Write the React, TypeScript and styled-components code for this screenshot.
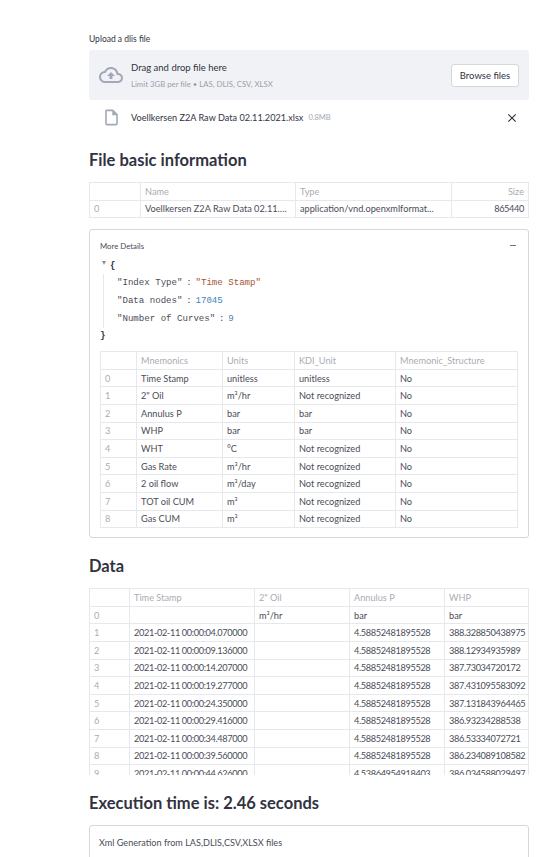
import React from 'react'
import styled, { createGlobalStyle } from 'styled-components'

const GlobalStyle = createGlobalStyle`
    html, body {
        margin: 0;
        padding: 0;
        height: 857px;
        overflow: hidden;
        background: #fff;
    }
    * {
        box-sizing: border-box;
    }
`

const Page = styled.main`
    width: 555px;
    padding: 34px 26px 0 89px;
    font-family: 'Lato', 'Open Sans', sans-serif;
    color: #31333f;
`

const UploadLabel = styled.label`
    display: block;
    font-size: 8.5px;
    line-height: 11px;
    margin-bottom: 5px;
`

const DropZone = styled.section`
    display: flex;
    align-items: center;
    height: 50px;
    padding: 0 10px;
    background: #f0f2f6;
    border-radius: 3px;
`

const CloudIcon = styled.svg`
    width: 24px;
    height: 24px;
    fill: #a3a8b8;
    margin-right: 8px;
`

const DropText = styled.div`
    flex: 1;
    display: flex;
    flex-direction: column;
    gap: 5px;
`

const DropTitle = styled.span`
    font-size: 9.5px;
    line-height: 12px;
`

const DropHint = styled.span`
    font-size: 7.8px;
    line-height: 10px;
    color: #9a9fa9;
`

const BrowseButton = styled.button`
    width: 68px;
    height: 23px;
    padding: 0;
    background: #fff;
    border: 1px solid #d5d7dc;
    border-radius: 3px;
    font-family: inherit;
    font-size: 9.5px;
    color: #31333f;
`

const FileRow = styled.div`
    display: flex;
    align-items: center;
    height: 35px;
    padding: 0 10px 0 13px;
`

const FileIcon = styled.svg`
    width: 19px;
    height: 19px;
    fill: #a3a8b8;
    margin-right: 10px;
`

const FileName = styled.span`
    font-size: 9.15px;
`

const FileSize = styled.span`
    flex: 1;
    margin-left: 5px;
    font-size: 7.5px;
    color: #a3a8b4;
`

const CloseIcon = styled.svg`
    width: 14px;
    height: 14px;
    fill: #31333f;
`

const Heading = styled.h2<{ $top: number; $bottom: number }>`
    margin: ${p => p.$top}px 0 ${p => p.$bottom}px;
    font-size: 16.5px;
    line-height: 22px;
    font-weight: 700;
    color: #31333f;
`

const Grid = styled.div<{ $cols: string }>`
    display: grid;
    grid-template-columns: ${p => p.$cols};
    grid-auto-rows: 17.6px;
    border-top: 1px solid #e6e8eb;
    border-left: 1px solid #e6e8eb;
`

const ClippedGrid = styled(Grid)`
    height: 187px;
    overflow: hidden;
`

const Cell = styled.div<{ $muted?: boolean; $right?: boolean; $numeric?: boolean }>`
    display: flex;
    align-items: center;
    justify-content: ${p => (p.$right ? 'flex-end' : 'flex-start')};
    min-width: 0;
    padding: 0 4px;
    border-right: 1px solid #e6e8eb;
    border-bottom: 1px solid #e6e8eb;
    font-size: 9.2px;
    letter-spacing: ${p => (p.$numeric ? '-0.36px' : '0')};
    white-space: nowrap;
    overflow: hidden;
    color: ${p => (p.$muted ? '#aaacb3' : '#4a4d58')};
`

const Ellipsis = styled.span`
    overflow: hidden;
    text-overflow: ellipsis;
`

const Expander = styled.section`
    margin-top: 11px;
    height: 309px;
    padding: 10px 10px 0;
    border: 1px solid #d5d7dc;
    border-radius: 3px;
`

const ExpanderHeader = styled.header`
    display: flex;
    justify-content: space-between;
    align-items: center;
    height: 11px;
    font-size: 7.8px;
    color: #4a4d58;
`

const Collapse = styled.span`
    width: 6px;
    height: 1px;
    margin-right: 2px;
    background: #707480;
`

const JsonBlock = styled.div`
    position: relative;
    margin: 7px 0;
    font-family: 'Liberation Mono', 'DejaVu Sans Mono', monospace;
    font-size: 9.1px;
    color: #4a4d58;
`

const JsonLine = styled.div<{ $indent?: boolean }>`
    height: 18px;
    line-height: 18px;
    padding-left: ${p => (p.$indent ? 17 : 0)}px;
`

const JsonBrace = styled(JsonLine)`
    height: 16px;
    line-height: 16px;
    padding-left: 0;
    color: #31333f;
    font-weight: 700;
`

const JsonOpen = styled(JsonBrace)`
    padding-left: 10px;
`

const Triangle = styled.span`
    position: absolute;
    left: 2px;
    top: 3px;
    width: 0;
    height: 0;
    border-left: 2.5px solid transparent;
    border-right: 2.5px solid transparent;
    border-top: 4px solid #8b8f99;
`

const Guide = styled.span`
    position: absolute;
    left: 3px;
    top: 16px;
    width: 1px;
    height: 54px;
    background: #e6e8eb;
`

const JsonColon = styled.span`
    display: inline-block;
    width: 13px;
    text-align: center;
`

const JsonString = styled.span`
    color: #a5582f;
`

const JsonNumber = styled.span`
    color: #3f86b8;
`

const NoteBox = styled.section`
    height: 60px;
    padding: 11px 9px;
    border: 1px solid #d5d7dc;
    border-radius: 3px;
    font-size: 9.1px;
    line-height: 12px;
    color: #4a4d58;
`

const detailRows = [
    ['Time Stamp', 'unitless', 'unitless', 'No'],
    ['2" Oil', 'm³/hr', 'Not recognized', 'No'],
    ['Annulus P', 'bar', 'bar', 'No'],
    ['WHP', 'bar', 'bar', 'No'],
    ['WHT', '°C', 'Not recognized', 'No'],
    ['Gas Rate', 'm³/hr', 'Not recognized', 'No'],
    ['2 oil flow', 'm³/day', 'Not recognized', 'No'],
    ['TOT oil CUM', 'm³', 'Not recognized', 'No'],
    ['Gas CUM', 'm³', 'Not recognized', 'No'],
]

const dataRows = [
    ['', 'm³/hr', 'bar', 'bar'],
    ['2021-02-11 00:00:04.070000', '', '4.58852481895528', '388.328850438975'],
    ['2021-02-11 00:00:09.136000', '', '4.58852481895528', '388.12934935989'],
    ['2021-02-11 00:00:14.207000', '', '4.58852481895528', '387.73034720172'],
    ['2021-02-11 00:00:19.277000', '', '4.58852481895528', '387.431095583092'],
    ['2021-02-11 00:00:24.350000', '', '4.58852481895528', '387.131843964465'],
    ['2021-02-11 00:00:29.416000', '', '4.58852481895528', '386.93234288538'],
    ['2021-02-11 00:00:34.487000', '', '4.58852481895528', '386.53334072721'],
    ['2021-02-11 00:00:39.560000', '', '4.58852481895528', '386.234089108582'],
    ['2021-02-11 00:00:44.626000', '', '4.53864954918403', '386.034588029497'],
]

const isNumeric = (value: string) => /^[\d.:\- ]+$/.test(value)

const TableBody = ({ rows }: { rows: string[][] }) => (
    <>
        {rows.map((row, i) => (
            <React.Fragment key={i}>
                <Cell $muted>{i}</Cell>
                {row.map((value, j) => (
                    <Cell key={j} $numeric={isNumeric(value)}>
                        {value}
                    </Cell>
                ))}
            </React.Fragment>
        ))}
    </>
)

const HeaderRow = ({ labels }: { labels: string[] }) => (
    <>
        <Cell $muted />
        {labels.map(label => (
            <Cell $muted key={label}>
                {label}
            </Cell>
        ))}
    </>
)

const App = () => (
    <Page>
        <GlobalStyle />
        <UploadLabel>Upload a dlis file</UploadLabel>
        <DropZone>
            <CloudIcon viewBox='0 0 24 24'>
                <path d='M19.35 10.04C18.67 6.59 15.64 4 12 4 9.11 4 6.6 5.64 5.35 8.04 2.34 8.36 0 10.91 0 14c0 3.31 2.69 6 6 6h13c2.76 0 5-2.24 5-5 0-2.64-2.05-4.78-4.65-4.96zM19 18H6c-2.21 0-4-1.79-4-4 0-2.05 1.53-3.76 3.56-3.97l1.07-.11.5-.95C8.08 7.14 9.94 6 12 6c2.62 0 4.88 1.86 5.39 4.43l.3 1.5 1.53.11c1.56.1 2.78 1.41 2.78 2.96 0 1.65-1.35 3-3 3zM8 13h2.55v3h2.9v-3H16l-4-4z' />
            </CloudIcon>
            <DropText>
                <DropTitle>Drag and drop file here</DropTitle>
                <DropHint>Limit 3GB per file • LAS, DLIS, CSV, XLSX</DropHint>
            </DropText>
            <BrowseButton>Browse files</BrowseButton>
        </DropZone>
        <FileRow>
            <FileIcon viewBox='0 0 24 24'>
                <path d='M14 2H6c-1.1 0-2 .9-2 2v16c0 1.1.9 2 2 2h12c1.1 0 2-.9 2-2V8l-6-6zM6 20V4h7v5h5v11H6z' />
            </FileIcon>
            <FileName>Voellkersen Z2A Raw Data 02.11.2021.xlsx</FileName>
            <FileSize>0.8MB</FileSize>
            <CloseIcon viewBox='0 0 24 24'>
                <path d='M19 6.41L17.59 5 12 10.59 6.41 5 5 6.41 10.59 12 5 17.59 6.41 19 12 13.41 17.59 19 19 17.59 13.41 12z' />
            </CloseIcon>
        </FileRow>
        <Heading $top={14} $bottom={11}>
            File basic information
        </Heading>
        <Grid $cols='51px 155px 156px 77px'>
            <HeaderRow labels={['Name', 'Type']} />
            <Cell $muted $right>
                Size
            </Cell>
            <Cell $muted>0</Cell>
            <Cell>
                <Ellipsis>Voellkersen Z2A Raw Data 02.11.2021.xlsx</Ellipsis>
            </Cell>
            <Cell>application/vnd.openxmlformat...</Cell>
            <Cell $right $numeric>
                865440
            </Cell>
        </Grid>
        <Expander>
            <ExpanderHeader>
                More Details
                <Collapse />
            </ExpanderHeader>
            <JsonBlock>
                <Triangle />
                <Guide />
                <JsonOpen>{'{'}</JsonOpen>
                <JsonLine $indent>
                    "Index Type"<JsonColon>:</JsonColon>
                    <JsonString>"Time Stamp"</JsonString>
                </JsonLine>
                <JsonLine $indent>
                    "Data nodes"<JsonColon>:</JsonColon>
                    <JsonNumber>17045</JsonNumber>
                </JsonLine>
                <JsonLine $indent>
                    "Number of Curves"<JsonColon>:</JsonColon>
                    <JsonNumber>9</JsonNumber>
                </JsonLine>
                <JsonBrace>{'}'}</JsonBrace>
            </JsonBlock>
            <Grid $cols='36px 86px 72px 101px 122px'>
                <HeaderRow labels={['Mnemonics', 'Units', 'KDI_Unit', 'Mnemonic_Structure']} />
                <TableBody rows={detailRows} />
            </Grid>
        </Expander>
        <Heading $top={17} $bottom={11}>
            Data
        </Heading>
        <ClippedGrid $cols='40px 125px 95px 95px 84px'>
            <HeaderRow labels={['Time Stamp', '2" Oil', 'Annulus P', 'WHP']} />
            <TableBody rows={dataRows} />
        </ClippedGrid>
        <Heading $top={17} $bottom={11}>
            Execution time is: 2.46 seconds
        </Heading>
        <NoteBox>Xml Generation from LAS,DLIS,CSV,XLSX files</NoteBox>
    </Page>
)

export default App
